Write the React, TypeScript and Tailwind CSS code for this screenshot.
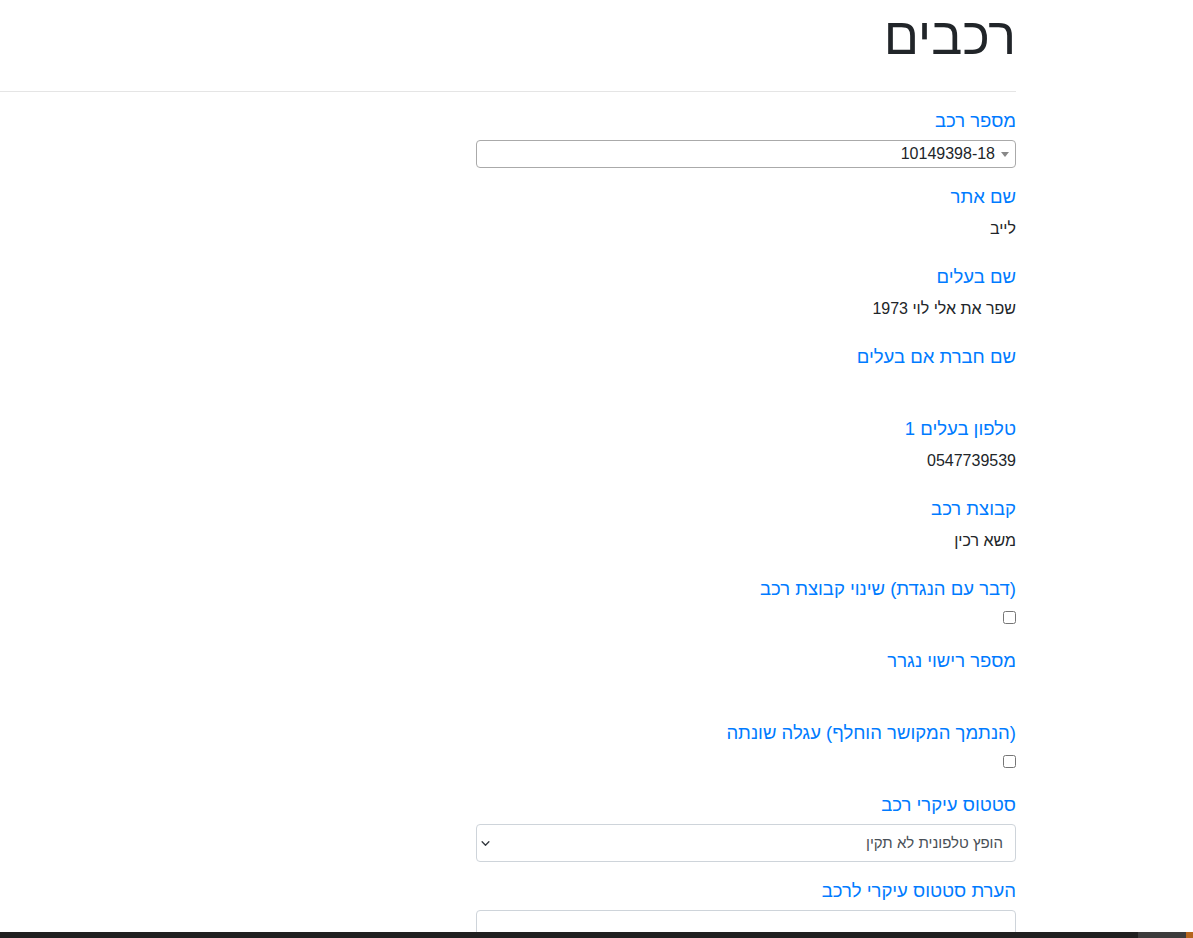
import React from 'react';

type Field =
  | { kind: 'text'; label: string; value: string }
  | { kind: 'empty'; label: string }
  | { kind: 'check'; label: string };

const fields: Field[] = [
  { kind: 'text', label: 'שם אתר', value: 'לייב' },
  { kind: 'text', label: 'שם בעלים', value: 'שפר את אלי לוי 1973' },
  { kind: 'empty', label: 'שם חברת אם בעלים' },
  { kind: 'text', label: 'טלפון בעלים 1', value: '0547739539' },
  { kind: 'text', label: 'קבוצת רכב', value: 'משא רכין' },
  { kind: 'check', label: '(דבר עם הנגדת) שינוי קבוצת רכב' },
  { kind: 'empty', label: 'מספר רישוי נגרר' },
  { kind: 'check', label: '(הנתמך המקושר הוחלף) עגלה שונתה' },
];

function Label({ children }: { children: React.ReactNode }) {
  return <div className="h-[28px] text-[18.5px] leading-[30px] text-[#007bff]">{children}</div>;
}

export default function App() {
  return (
    <div className="min-h-screen bg-white text-[#212529]" style={{ fontFamily: '"Liberation Sans", Arial, sans-serif' }}>
      <div dir="rtl" className="w-[1016px]">
        <div className="border-b border-[#e5e5e5]">
          <h1 className="h-[91px] pt-[5px] text-[52px] leading-[62px] font-normal">רכבים</h1>
        </div>

        <div className="w-[540px] pt-[14px]">
          {/* vehicle number */}
          <div className="mb-[14px]">
            <Label>מספר רכב</Label>
            <div className="mt-[6px] flex h-[28px] items-center rounded-[4px] border border-[#aaa] bg-white pr-[6px] text-[16px]">
              <span className="ml-[6px] h-0 w-0 border-x-[4px] border-t-[5px] border-x-transparent border-t-[#888]" />
              <span>10149398-18</span>
            </div>
          </div>

          {fields.map((f, i) => (
            <div key={i} className={f.kind === 'check' ? 'mb-[22px]' : 'mb-[24px]'}>
              <Label>{f.label}</Label>
              {f.kind === 'text' && <div className="mt-[8px] h-[20px] text-[16px] leading-[21px]">{f.value}</div>}
              {f.kind === 'empty' && <div className="mt-[8px] h-[12px]" />}
              {f.kind === 'check' && (
                <div className="mt-[9px] flex h-[13px] items-center">
                  <input type="checkbox" className="m-0 h-[13px] w-[13px]" />
                </div>
              )}
            </div>
          ))}

          {/* main status */}
          <div className="mb-[14px]">
            <Label>סטטוס עיקרי רכב</Label>
            <div className="mt-[6px] flex h-[38px] items-center justify-between rounded-[4px] border border-[#ced4da] bg-white pr-[12px] pl-[4px] text-[15px] text-[#495057]">
              <span>הופץ טלפונית לא תקין</span>
              <svg width="9" height="9" viewBox="0 0 16 16" className="text-[#343a40]">
                <path d="M2 5l6 6 6-6" fill="none" stroke="currentColor" strokeWidth="2.4" strokeLinecap="round" strokeLinejoin="round" />
              </svg>
            </div>
          </div>

          <div>
            <Label>הערת סטטוס עיקרי לרכב</Label>
            <div className="mt-[6px] h-[60px] rounded-[4px] border border-[#ced4da]" />
          </div>
        </div>
      </div>

      {/* bottom strip */}
      <div className="fixed bottom-0 left-0 flex h-[6px] w-full bg-[#202020]">
        <div className="flex-1" />
        <div className="w-[48px] bg-[#3c3c3c]" />
        <div className="w-[7px] bg-[#b5651d]" />
      </div>
    </div>
  );
}
